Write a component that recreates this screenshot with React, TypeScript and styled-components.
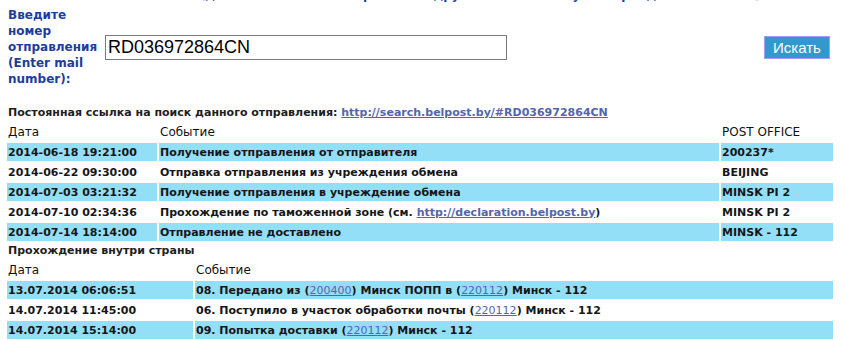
import * as React from "react";
import styled, { createGlobalStyle } from "styled-components";

const GlobalStyle = createGlobalStyle`
    html, body {
        margin: 0;
        padding: 0;
        background: #fff;
    }
    body {
        font-family: "DejaVu Sans", Verdana, sans-serif;
        font-size: 11px;
        color: #1e1e1e;
    }
`;

const Page = styled.div`
    width: 843px;
    height: 340px;
    overflow: hidden;
    padding: 0 8px 0 5px;
    box-sizing: border-box;
`;

const CutLine = styled.div`
    height: 4px;
    overflow: hidden;
    text-align: center;
    padding-left: 120px;
`;

const CutText = styled.div`
    margin-top: -12px;
    font-weight: bold;
    font-size: 12px;
    line-height: 14px;
    color: #1e3f9e;
`;

const SearchForm = styled.form`
    display: flex;
    align-items: center;
    margin: 3px 0 18px 3px;
`;

const Label = styled.label`
    width: 97px;
    font-weight: bold;
    font-size: 12px;
    line-height: 16px;
    color: #1d3d9c;
`;

const NumberInput = styled.input`
    width: 402px;
    height: 25px;
    box-sizing: border-box;
    border: 1px solid #7a7a7a;
    padding: 0 2px;
    font-family: "Liberation Sans", Arial, sans-serif;
    font-size: 18px;
    color: #000;
    outline: none;
`;

const SearchButton = styled.button`
    margin-left: auto;
    margin-right: 5px;
    width: 66px;
    height: 23px;
    padding: 0;
    background: #3399cc;
    border: 1px solid #9f9ff5;
    color: #fff;
    font-family: "Liberation Sans", Arial, sans-serif;
    font-size: 15px;
`;

const Line = styled.div`
    font-weight: bold;
    line-height: 16px;
    padding-left: 3px;
`;

const Link = styled.a<{ $bold?: boolean }>`
    color: #5565ac;
    text-decoration: underline;
    font-weight: ${props => (props.$bold ? "bold" : "normal")};
`;

const Table = styled.table`
    width: 100%;
    border-collapse: separate;
    border-spacing: 2px;
`;

const HeadCell = styled.th<{ $width?: number }>`
    text-align: left;
    font-size: 12px;
    font-weight: normal;
    color: #111;
    height: 18px;
    padding: 0 1px;
    ${props => props.$width && `width: ${props.$width}px;`}
`;

const Cell = styled.td<{ $filled: boolean }>`
    height: 18px;
    padding: 0 1px;
    font-weight: bold;
    white-space: nowrap;
    color: #161616;
    background: ${props => (props.$filled ? "#94dff8" : "transparent")};
`;

const abroad = [
    { date: "2014-06-18 19:21:00", event: "Получение отправления от отправителя", office: "200237*" },
    { date: "2014-06-22 09:30:00", event: "Отправка отправления из учреждения обмена", office: "BEIJING" },
    { date: "2014-07-03 03:21:32", event: "Получение отправления в учреждение обмена", office: "MINSK PI 2" },
    { date: "2014-07-10 02:34:36", event: "customs", office: "MINSK PI 2" },
    { date: "2014-07-14 18:14:00", event: "Отправление не доставлено", office: "MINSK - 112" },
];

const inland: { date: string; event: React.ReactNode }[] = [
    {
        date: "13.07.2014 06:06:51",
        event: (
            <>
                08. Передано из (<Link href="#">200400</Link>) Минск ПОПП в (<Link href="#">220112</Link>) Минск - 112
            </>
        ),
    },
    {
        date: "14.07.2014 11:45:00",
        event: (
            <>
                06. Поступило в участок обработки почты (<Link href="#">220112</Link>) Минск - 112
            </>
        ),
    },
    {
        date: "14.07.2014 15:14:00",
        event: (
            <>
                09. Попытка доставки (<Link href="#">220112</Link>) Минск - 112
            </>
        ),
    },
];

const App = () => (
    <Page>
        <GlobalStyle />
        <CutLine>
            <CutText>(для отслеживания отправлений других почтовых служб перейдите по ссылке)</CutText>
        </CutLine>
        <SearchForm onSubmit={e => e.preventDefault()}>
            <Label htmlFor="num">
                Введите
                <br />
                номер
                <br />
                отправления
                <br />
                (Enter mail
                <br />
                number):
            </Label>
            <NumberInput id="num" defaultValue="RD036972864CN" />
            <SearchButton type="submit">Искать</SearchButton>
        </SearchForm>
        <Line>
            Постоянная ссылка на поиск данного отправления:{" "}
            <Link $bold href="#">http://search.belpost.by/#RD036972864CN</Link>
        </Line>
        <Table>
            <thead>
                <tr>
                    <HeadCell $width={148}>Дата</HeadCell>
                    <HeadCell>Событие</HeadCell>
                    <HeadCell $width={110}>POST OFFICE</HeadCell>
                </tr>
            </thead>
            <tbody>
                {abroad.map((row, i) => (
                    <tr key={row.date}>
                        <Cell $filled={i % 2 === 0}>{row.date}</Cell>
                        <Cell $filled={i % 2 === 0}>
                            {row.event === "customs" ? (
                                <>
                                    Прохождение по таможенной зоне (см.{" "}
                                    <Link $bold href="#">http://declaration.belpost.by</Link>)
                                </>
                            ) : (
                                row.event
                            )}
                        </Cell>
                        <Cell $filled={i % 2 === 0}>{row.office}</Cell>
                    </tr>
                ))}
            </tbody>
        </Table>
        <Line>Прохождение внутри страны</Line>
        <Table>
            <thead>
                <tr>
                    <HeadCell $width={184}>Дата</HeadCell>
                    <HeadCell>Событие</HeadCell>
                </tr>
            </thead>
            <tbody>
                {inland.map((row, i) => (
                    <tr key={row.date}>
                        <Cell $filled={i % 2 === 0}>{row.date}</Cell>
                        <Cell $filled={i % 2 === 0}>{row.event}</Cell>
                    </tr>
                ))}
            </tbody>
        </Table>
    </Page>
);

export default App;
